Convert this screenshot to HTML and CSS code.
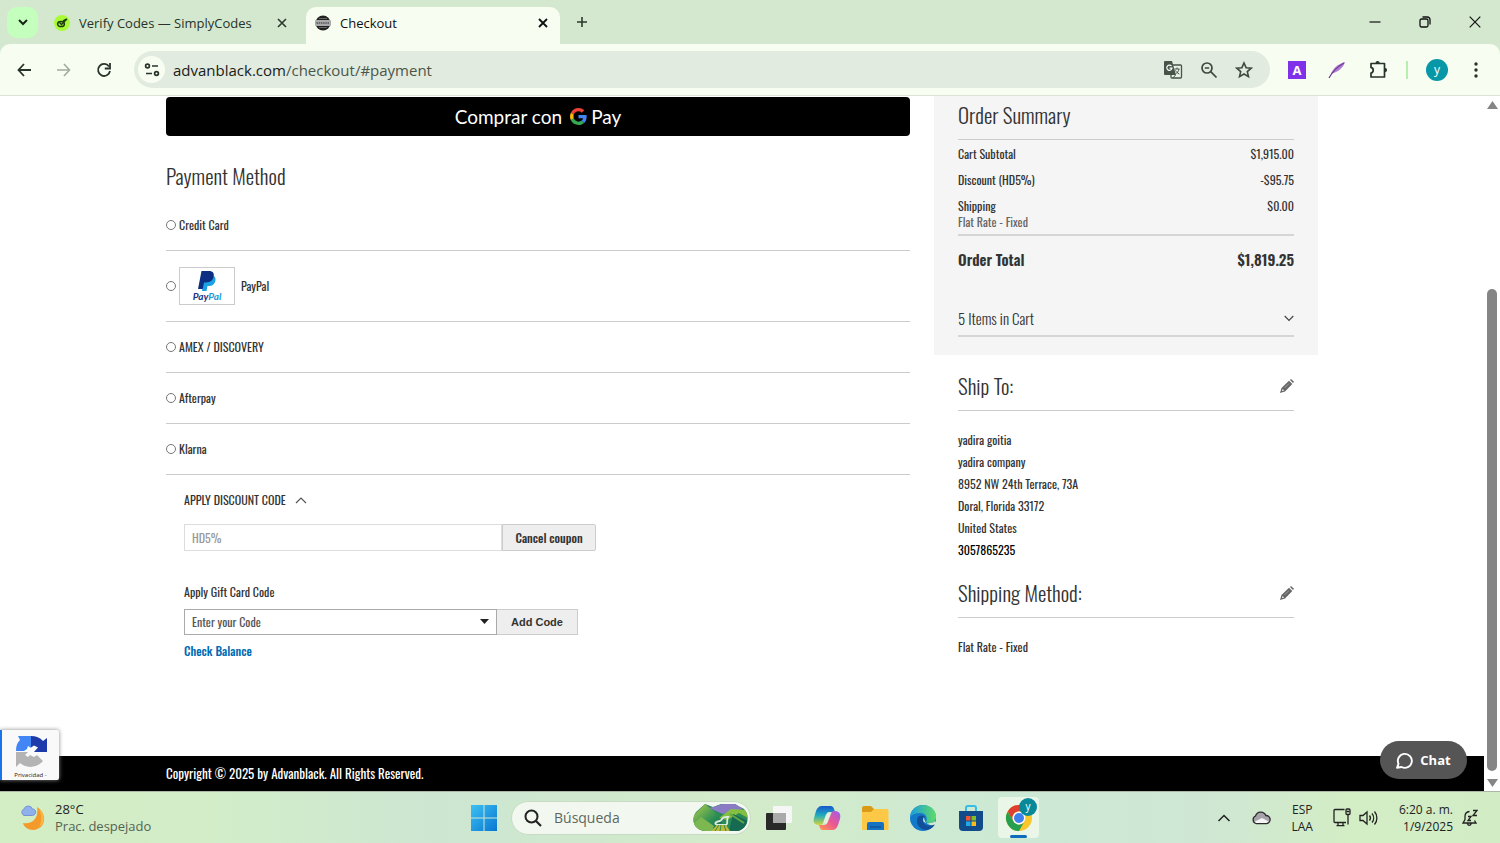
FILE: index.html
```html
<!DOCTYPE html>
<html lang="es">
<head>
  <meta charset="UTF-8">
  <meta name="viewport" content="width=device-width, initial-scale=1.0">
  <title>Checkout</title>
  <link rel="stylesheet" href="styles.css">
</head>
<body>
  <header class="tabstrip">
    <button class="tab-search" aria-label="Buscar pestañas">
      <svg width="12" height="12" viewBox="0 0 12 12"><path d="M2 4l4 4 4-4" fill="none" stroke="#17251a" stroke-width="2"/></svg>
    </button>
    <div class="tab">
      <svg width="16" height="16" viewBox="0 0 16 16"><circle cx="8" cy="8" r="8" fill="#a9fb38"/><ellipse cx="7" cy="9" rx="3.400" ry="2.600" fill="none" stroke="#1c3b10" stroke-width="1.500"/><path d="M5.500 7.500l2 2L13 4M9 6l4-2" fill="none" stroke="#1c3b10" stroke-width="1.400"/></svg>
      <span class="tab-title">Verify Codes — SimplyCodes</span>
      <button class="icon-button" aria-label="Cerrar"><svg width="10" height="10" viewBox="0 0 10 10"><path d="M1 1l8 8M9 1L1 9" stroke="#2c3a2e" stroke-width="1.600"/></svg></button>
    </div>
    <div class="tab active">
      <svg width="16" height="16" viewBox="0 0 16 16"><circle cx="8" cy="8" r="7.500" fill="#222"/><path d="M4 3.500h8M4 12.500h8" stroke="#666" stroke-width="1"/><rect x="0" y="5" width="16" height="6" rx="1" fill="#aaa"/><path d="M1.500 8h13" stroke="#6a6a6a" stroke-width="2" stroke-dasharray="1.500 .7"/></svg>
      <span class="tab-title">Checkout</span>
      <button class="icon-button" aria-label="Cerrar"><svg width="10" height="10" viewBox="0 0 10 10"><path d="M1 1l8 8M9 1L1 9" stroke="#111" stroke-width="1.800"/></svg></button>
    </div>
    <button class="icon-button new-tab" aria-label="Nueva pestaña"><svg width="12" height="12" viewBox="0 0 12 12"><path d="M6 1v10M1 6h10" stroke="#2c3a2e" stroke-width="1.600"/></svg></button>
    <div class="window-buttons">
      <button class="icon-button" aria-label="Minimizar"><svg width="12" height="12" viewBox="0 0 12 12"><path d="M0.500 6h11" stroke="#111" stroke-width="1.200"/></svg></button>
      <button class="icon-button" aria-label="Restaurar"><svg width="12" height="12" viewBox="0 0 12 12"><rect x="1" y="3" width="8" height="8" rx="1.500" fill="none" stroke="#111" stroke-width="1.300"/><path d="M3.500 1h5A2.500 2.500 0 0 1 11 3.500v5" fill="none" stroke="#111" stroke-width="1.300"/></svg></button>
      <button class="icon-button" aria-label="Cerrar ventana"><svg width="12" height="12" viewBox="0 0 12 12"><path d="M.7.7l10.600 10.600M11.300.7L.7 11.300" stroke="#111" stroke-width="1.200"/></svg></button>
    </div>
  </header>

  <nav class="toolbar">
    <div class="nav-buttons">
      <button class="icon-button" aria-label="Atrás"><svg width="16" height="16" viewBox="0 0 16 16"><path d="M8 2L2.500 8 8 14M2.500 8H15" fill="none" stroke="#28332a" stroke-width="1.800"/></svg></button>
      <button class="icon-button" aria-label="Adelante"><svg width="16" height="16" viewBox="0 0 16 16"><path d="M8 2l5.500 6L8 14M13.500 8H1" fill="none" stroke="#a2aba0" stroke-width="1.600"/></svg></button>
      <button class="icon-button" aria-label="Recargar"><svg width="16" height="16" viewBox="0 0 16 16"><path d="M13 4.500A6 6 0 1 0 14 9" fill="none" stroke="#28332a" stroke-width="1.800"/><path d="M14 1v5.500H8.800" fill="none" stroke="#28332a" stroke-width="1.800"/></svg></button>
    </div>
    <div class="address-bar">
      <button class="site-info" aria-label="Información del sitio"><svg width="16" height="14" viewBox="0 0 16 14"><g fill="none" stroke="#28332a" stroke-width="1.700"><circle cx="3.500" cy="3" r="1.900"/><path d="M8 3h6M2 10.500h6"/><circle cx="12.500" cy="10.500" r="1.900"/></g></svg></button>
      <a class="url" href="#payment">advanblack.com<span>/checkout/#payment</span></a>
      <button class="icon-button" aria-label="Traducir"><svg width="20" height="20" viewBox="0 0 20 20"><rect x="8" y="5" width="10.500" height="13" rx="1" fill="#e9f0e4" stroke="#48544a" stroke-width="1.300"/><path d="M2 1h7l4 14H2a1 1 0 0 1-1-1V2a1 1 0 0 1 1-1z" fill="#48544a"/><path d="M8.500 6.200a2.600 2.600 0 1 0 .5 2H6.500" fill="none" stroke="#fff" stroke-width="1.200"/><path d="M11.500 9h5M14 7.500V9M16 9c-.5 2.500-2 4-3.500 5M12.500 10.500c.8 1.500 2 2.500 3.800 3.500M10 18l2.500-3" fill="none" stroke="#48544a"/></svg></button>
      <button class="icon-button" aria-label="Zoom"><svg width="18" height="18" viewBox="0 0 18 18"><g fill="none" stroke="#3d493f" stroke-width="1.700"><circle cx="7" cy="7" r="5"/><path d="M10.700 10.700L16.500 16.500M4.800 7h4.400"/></g></svg></button>
      <button class="icon-button" aria-label="Favoritos"><svg width="18" height="18" viewBox="0 0 18 18"><path d="M9 2l2.100 4.700 5.100.5-3.900 3.400 1.200 5L9 13l-4.500 2.600 1.200-5L1.800 7.200l5.100-.5z" fill="none" stroke="#3d493f" stroke-width="1.600"/></svg></button>
    </div>
    <button class="ext-a" aria-label="Extensión A">A</button>
    <button class="icon-button" aria-label="Extensión pluma"><svg width="18" height="18" viewBox="0 0 18 18"><path d="M17 1C10 3 5 7 3 13c6-2 12-5 14-12z" fill="#b27fd4"/><path d="M1 17C4 11 9 6 16 2" fill="none" stroke="#6c3b92" stroke-width="1.200"/></svg></button>
    <button class="icon-button" aria-label="Extensiones"><svg width="20" height="20" viewBox="0 0 20 20"><path d="M3 3.500h13.500v13.500H3v-3.900c3-.8 3-4.900 0-5.700z" fill="none" stroke="#28332a" stroke-width="1.700" stroke-linejoin="round"/><path d="M7.500 3a2.100 2.100 0 0 1 4.200 0zM17 8a2.100 2.100 0 0 1 0 4.200z" fill="#28332a"/></svg></button>
    <span class="divider"></span>
    <button class="avatar" aria-label="Perfil">y</button>
    <button class="icon-button menu" aria-label="Menú"><svg width="16" height="18" viewBox="0 0 16 18"><g fill="#28332a"><circle cx="8" cy="3" r="1.700"/><circle cx="8" cy="9" r="1.700"/><circle cx="8" cy="15" r="1.700"/></g></svg></button>
  </nav>

  <div class="viewport">
    <div class="page">
      <main class="checkout">
        <section class="payment">
          <button class="gpay" aria-label="Comprar con Google Pay">
            <span>Comprar con</span>
            <span class="gpay-logo">
              <svg width="17" height="17" viewBox="0 0 48 48"><path fill="#ea4335" d="M24 9.500c3.540 0 6.710 1.220 9.210 3.600l6.850-6.850C35.900 2.380 30.470 0 24 0 14.620 0 6.510 5.380 2.560 13.220l7.980 6.190C12.430 13.720 17.740 9.500 24 9.500z"/><path fill="#4285f4" d="M46.980 24.550c0-1.570-.15-3.090-.38-4.550H24v9.020h12.940c-.58 2.960-2.260 5.480-4.780 7.180l7.730 6c4.510-4.180 7.090-10.360 7.090-17.650z"/><path fill="#fbbc05" d="M10.530 28.590c-.48-1.450-.76-2.990-.76-4.590s.27-3.140.76-4.590l-7.980-6.190C.92 16.460 0 20.120 0 24c0 3.880.92 7.540 2.560 10.780l7.970-6.190z"/><path fill="#34a853" d="M24 48c6.480 0 11.930-2.130 15.890-5.810l-7.730-6c-2.150 1.450-4.920 2.300-8.160 2.300-6.260 0-11.570-4.220-13.470-9.910l-7.980 6.190C6.510 42.620 14.620 48 24 48z"/></svg>
              Pay
            </span>
          </button>
          <h2>Payment Method</h2>
          <div class="methods">
            <label class="method"><input type="radio" name="method">Credit Card</label>
            <label class="method"><input type="radio" name="method">
              <span class="paypal-logo">
                <svg width="18" height="20" viewBox="0 0 18 20"><path d="M6 5h8c3 0 4 2 3.300 5-.8 3.500-3 5-6.300 5H9.500L8.500 20H4z" fill="#1ba0e2"/><path d="M3.500 0H11c4 0 5.500 2.300 4.600 5.800C14.700 9.500 12 11.500 8 11.500H6L4.700 18H0z" fill="#0d2f81"/></svg>
                <b>Pay<i>Pal</i></b>
              </span>
              PayPal</label>
            <label class="method"><input type="radio" name="method">AMEX / DISCOVERY</label>
            <label class="method"><input type="radio" name="method">Afterpay</label>
            <label class="method"><input type="radio" name="method">Klarna</label>
          </div>

          <div class="codes">
            <button class="discount-title">APPLY DISCOUNT CODE
              <svg width="12" height="8" viewBox="0 0 12 8"><path d="M1 7l5-5 5 5" fill="none" stroke="#555" stroke-width="1.200"/></svg>
            </button>
            <div class="coupon-row">
              <input type="text" value="HD5%" aria-label="Discount code" disabled>
              <button>Cancel coupon</button>
            </div>
            <label class="gift-label" for="gift">Apply Gift Card Code</label>
            <div class="gift-row">
              <div class="select-wrap">
                <select id="gift"><option>Enter your Code</option></select>
                <svg class="caret" width="9" height="5" viewBox="0 0 9 5"><path d="M0 0h9L4.500 5z" fill="#222"/></svg>
              </div>
              <button>Add Code</button>
            </div>
            <a class="balance" href="#balance">Check Balance</a>
          </div>
        </section>

        <aside class="sidebar">
          <section class="summary">
            <h2>Order Summary</h2>
            <table class="totals">
              <tr><th scope="row">Cart Subtotal</th><td>$1,915.00</td></tr>
              <tr><th scope="row">Discount (HD5%)</th><td>-$95.75</td></tr>
              <tr><th scope="row">Shipping<small>Flat Rate - Fixed</small></th><td>$0.00</td></tr>
              <tr class="grand"><th scope="row">Order Total</th><td>$1,819.25</td></tr>
            </table>
            <button class="items">5 Items in Cart
              <svg width="10" height="7" viewBox="0 0 10 7"><path d="M.7 1L5 5.300 9.300 1" fill="none" stroke="#444" stroke-width="1.200"/></svg>
            </button>
          </section>
          <section class="info">
            <div class="info-title">
              <h2>Ship To:</h2>
              <button class="icon-button" aria-label="Editar dirección"><svg width="14" height="14" viewBox="0 0 14 14"><path d="M0 14l1.500-5L9 1.700 12.300 5 5 12.500z" fill="#666"/><path d="M10 1l1-1 3 2.800-1 1.300z" fill="#666"/><path d="M1.900 12.100l.8-2.200 1.500 1.500z" fill="#fff"/><path d="M4.500 9l4.500-4.500" stroke="#bbb" stroke-width=".7"/></svg></button>
            </div>
            <p>yadira goitia<br>yadira company<br>8952 NW 24th Terrace, 73A<br>Doral, Florida 33172<br>United States<br><a href="tel:3057865235">3057865235</a></p>
          </section>
          <section class="info">
            <div class="info-title">
              <h2>Shipping Method:</h2>
              <button class="icon-button" aria-label="Editar envío"><svg width="14" height="14" viewBox="0 0 14 14"><path d="M0 14l1.500-5L9 1.700 12.300 5 5 12.500z" fill="#666"/><path d="M10 1l1-1 3 2.800-1 1.300z" fill="#666"/><path d="M1.900 12.100l.8-2.200 1.500 1.500z" fill="#fff"/><path d="M4.500 9l4.500-4.500" stroke="#bbb" stroke-width=".7"/></svg></button>
            </div>
            <p>Flat Rate - Fixed</p>
          </section>
        </aside>
      </main>
      <footer class="footer"><div>Copyright © 2025 by Advanblack. All Rights Reserved.</div></footer>
    </div>

    <div class="scrollbar">
      <svg width="11" height="8" viewBox="0 0 11 8"><path d="M5.500 0L11 8H0z" fill="#858585"/></svg>
      <span class="gap"></span>
      <span class="thumb"></span>
      <svg width="11" height="8" viewBox="0 0 11 8"><path d="M0 0h11L5.500 8z" fill="#858585"/></svg>
    </div>

    <div class="recaptcha">
      <svg width="32" height="32" viewBox="0 0 32 32"><path d="M16 1c5 0 9 1.500 12 5l4-3v14H19l4-4.500-4-2-3 2z" fill="#1c3aa9"/><path d="M16 1v12l-3-2-1 3-3 2H1c0-5 1-8 4-11L3 1z" fill="#4285f4"/><path d="M1 17h12l-3 3 3 2 2-2 4 2 3-2 6 6C21 34 10 33 5 28l-4 4z" fill="#b4b4b4"/></svg>
      <span>Privacidad -</span>
    </div>
    <button class="chat">
      <svg width="17" height="17" viewBox="0 0 17 17"><path d="M1 15.800l1.500-4A7 7 0 1 1 5.500 15z" fill="none" stroke="#fff" stroke-width="1.900" stroke-linejoin="round"/></svg>
      Chat
    </button>
  </div>

  <div class="taskbar">
    <div class="weather">
      <svg width="26" height="26" viewBox="0 0 26 26"><path d="M17 2c11 7 9 22-4 23C8 25 4 22 3 18c10 2 16-6 14-16z" fill="#f39a2b"/><path d="M19 4c7 6 6 15 0 18 3-6 3-12 0-18z" fill="#fbb646"/><path d="M4 10.500a3.500 3.500 0 0 1 0-6.500 4.500 4.500 0 0 1 8.500 0c4 0 4.500 6 0 6.500z" fill="#8fb0ea" stroke="#7395d8"/></svg>
      <div>28°C<small>Prac. despejado</small></div>
    </div>
    <div class="apps">
      <button class="app" aria-label="Inicio"><svg width="26" height="26" viewBox="0 0 26 26"><defs><linearGradient id="win" x1="0" y1="0" x2="1" y2="1"><stop offset="0" stop-color="#3cc1f3"/><stop offset="1" stop-color="#0876d2"/></linearGradient></defs><path d="M0 0h12.500v12.500H0zM13.500 0H26v12.500H13.500zM0 13.500h12.500V26H0zM13.500 13.500H26V26H13.500z" fill="url(#win)"/></svg></button>
      <div class="search">
        <svg width="18" height="18" viewBox="0 0 18 18"><circle cx="7.500" cy="7.500" r="6" fill="none" stroke="#222" stroke-width="2"/><path d="M12 12l5 5" stroke="#222" stroke-width="2.200"/></svg>
        <input type="search" placeholder="Búsqueda" aria-label="Búsqueda">
        <svg class="landscape" width="55" height="27" viewBox="0 0 55 27">
          <defs>
            <clipPath id="pill"><path d="M3 8L12 0l8 3 8-3h14l5 3c11 3 10 21-2 24H13C2 27-3 17 3 8z"/></clipPath>
            <linearGradient id="hill" x1="0" y1="0" x2="1" y2="1"><stop offset="0" stop-color="#b4cf4c"/><stop offset=".6" stop-color="#2d8f55"/><stop offset="1" stop-color="#146052"/></linearGradient>
          </defs>
          <g clip-path="url(#pill)">
            <path d="M0 0h55v27H0z" fill="#2c8a58"/>
            <path d="M16 4L30 0h14l6 5-20 5z" fill="#8a7cc4"/>
            <path d="M0 12L12 0l18 15-4 12H0z" fill="url(#hill)"/>
            <path d="M0 20l8-7 13 9-2 5H0z" fill="#7cb84f"/>
            <path d="M26 14L38 5l17 1v8l-9-5-12 7z" fill="#84bf42"/>
            <path d="M40 10l15 7v10H36z" fill="#176a52"/>
            <path d="M37 10l14 9" stroke="#5fa845" stroke-width="2"/>
            <path d="M34 13c-6-1-4 3-7 4-6 1-6 4-1 4h6c4 0 1-5 3-8z" fill="none" stroke="#dceadf" stroke-width="1.800"/>
            <path d="M18 27l6-6h9l4 6z" fill="#b9bb3c"/>
            <path d="M22 27l4-6M27 27l1-6M33 27l-2-6" stroke="#3a8a3e"/>
          </g>
        </svg>
      </div>
      <button class="app" aria-label="Vista de tareas"><svg width="28" height="28" viewBox="0 0 28 28"><rect x="8" y="2" width="19" height="17" rx="1" fill="#f6f6f6"/><rect x="1" y="9" width="20" height="17" rx="1" fill="#292929"/><path d="M8 9h13v10H8z" fill="#aaa"/></svg></button>
      <button class="app" aria-label="Copilot"><svg width="28" height="28" viewBox="0 0 28 28"><defs><linearGradient id="cop1" x1="0" y1="0" x2="0" y2="1"><stop offset="0" stop-color="#1757cc"/><stop offset=".5" stop-color="#20aebd"/><stop offset="1" stop-color="#d6d43a"/></linearGradient><linearGradient id="cop2" x1="1" y1="0" x2="0" y2="1"><stop offset="0" stop-color="#9c5df0"/><stop offset=".5" stop-color="#ec5690"/><stop offset="1" stop-color="#ff9b4d"/></linearGradient></defs><path d="M9 2h9c2 0 3 2 4 6h-5c-3 0-4 2-5 5l-2 6c-1 2-2 2-4 2-5 0-6-3-5-7l2-7c1-3 3-5 6-5z" fill="url(#cop1)"/><path d="M19 26h-9c-2 0-3-1-4-5h5c3 0 4-3 5-6l2-5c1-3 2-3 4-3 5 0 6 4 5 8l-2 6c-1 3-3 5-6 5z" fill="url(#cop2)"/><path d="M16 9l-4 10" stroke="#e6f2e1" stroke-width="3"/></svg></button>
      <button class="app" aria-label="Explorador"><svg width="28" height="28" viewBox="0 0 28 28"><path d="M1 4a2 2 0 0 1 2-2h7l3 3v5H1z" fill="#d99b16"/><path d="M1 8h9l3-3h13a1.500 1.500 0 0 1 1.500 1.500V26H1z" fill="#fcc846"/><path d="M6 26v-6a2 2 0 0 1 2-2h13a2 2 0 0 1 2 2v6z" fill="#1673c3"/><path d="M9 23h11" stroke="#0d559b" stroke-width="1.500"/></svg></button>
      <button class="app" aria-label="Edge"><svg width="28" height="28" viewBox="0 0 28 28"><defs><linearGradient id="edge"><stop offset="0" stop-color="#1b9cdd"/><stop offset="1" stop-color="#5fdc67"/></linearGradient></defs><circle cx="14" cy="14" r="13" fill="#1379c9"/><path d="M1 13C2 5 8 1 14 1c9 0 14 7 13 13-1 5-7 6-10 4 2-4 0-9-6-9-5 0-8 2-10 4z" fill="url(#edge)"/><path d="M9 13c-3 6 1 13 9 13 4-1 7-3 8-6-5 3-11 2-12-3 0-2 1-3 2-4-2-2-5-2-7 0z" fill="#124f9a"/><path d="M15 13c-3 5 2 7 6 6 2 0 4-1 5-2l1 3c-5 3-12 0-12-7z" fill="#d4ebd0"/></svg></button>
      <button class="app" aria-label="Microsoft Store"><svg width="28" height="28" viewBox="0 0 28 28"><path d="M9 8V4a2 2 0 0 1 2-2h6a2 2 0 0 1 2 2v4" fill="none" stroke="#35bde6" stroke-width="2"/><path d="M2 7h24v16a4 4 0 0 1-4 4H6a4 4 0 0 1-4-4z" fill="#124b89"/><path d="M9 12h4.500v4.500H9z" fill="#ef5630"/><path d="M14.500 12H19v4.500h-4.500z" fill="#82bd25"/><path d="M9 17.500h4.500V22H9z" fill="#20a9e8"/><path d="M14.500 17.500H19V22h-4.500z" fill="#fdbd19"/></svg></button>
      <button class="app current" aria-label="Chrome">
        <svg width="28" height="28" viewBox="0 0 28 28"><circle cx="14" cy="14" r="13" fill="#f9c62c"/><path d="M2.700 7.500A13 13 0 0 1 25.300 7.500H14a6.500 6.500 0 0 0-5.700 9.700z" fill="#df3f31"/><path d="M2.700 7.500A13 13 0 0 0 14 27l5.600-9.700a6.500 6.500 0 0 1-11.300 0z" fill="#279f50"/><circle cx="14" cy="14" r="6.400" fill="#fff"/><circle cx="14" cy="14" r="5" fill="#3e80ed"/></svg>
        <span class="badge">y</span>
      </button>
    </div>
    <div class="tray">
      <button class="icon-button" aria-label="Iconos ocultos"><svg width="14" height="14" viewBox="0 0 14 14"><path d="M1.500 10L7 4.500l5.500 5.500" fill="none" stroke="#222" stroke-width="1.500"/></svg></button>
      <svg width="20" height="14" viewBox="0 0 20 14"><path d="M5 12.500a4 4 0 0 1-.5-7.500 5.500 5.500 0 0 1 10.300-.5 4 4 0 0 1 .7 8z" fill="#a7a3aa" stroke="#2c2c2c" stroke-width="1.300"/><path d="M4 10.500l7-3.500 6.500 3.500-2 1.500H5z" fill="#f5f5f5"/></svg>
      <div class="lang">ESP<br>LAA</div>
      <div class="status">
        <svg width="18" height="19" viewBox="0 0 18 19"><g fill="none" stroke="#222" stroke-width="1.300"><path d="M11.500 1.500H2a1 1 0 0 0-1 1v11a1 1 0 0 0 1 1h11M5 14.500v3M10 14.500v3M3.500 17.700h8"/><rect x="13" y="1" width="4" height="5.500" rx="1"/><path d="M15 6.500v10M13.500 3.500h3"/></g></svg>
        <svg width="20" height="16" viewBox="0 0 20 16"><g fill="none" stroke="#222" stroke-width="1.300"><path d="M1 5.500v5h3l4 3.500V2L4 5.500z"/><path d="M10.500 5.500a4 4 0 0 1 0 5M13 3.500a7 7 0 0 1 0 9M15.500 1.500a10 10 0 0 1 0 13"/></g></svg>
      </div>
      <div class="clock">
        <div>6:20 a. m.<br>1/9/2025</div>
        <svg width="16" height="18" viewBox="0 0 16 18"><g fill="none" stroke="#222" stroke-width="1.300"><path d="M7.500 2.500c-3 .3-4.500 2.500-4.500 5v3L1 14h13l-1.500-2.500M5.500 14.500c.5 2.500 3 2.500 3.700 0"/><path d="M6 7.500h3l-3 4h3M11 1.500h4L11 6.500h4"/></g></svg>
      </div>
    </div>
  </div>
</body>
</html>
```
FILE: styles.css
```css
* {
  box-sizing: border-box;
}
html, body {
  margin: 0;
  height: 100%;
}
body {
  display: flex;
  flex-direction: column;
  overflow: hidden;
  font-family: "Open Sans", "Noto Sans", sans-serif;
  font-size: 13px;
  background: #d3e8cf;
  color: #28332a;
}
button, input, select {
  font: inherit;
  color: inherit;
  margin: 0;
}
button {
  display: flex;
  align-items: center;
  justify-content: center;
  padding: 0;
  border: none;
  background: none;
  white-space: nowrap;
  cursor: pointer;
}
a {
  color: inherit;
  text-decoration: none;
}
svg {
  display: block;
  flex: none;
}
h2, p {
  margin: 0;
}

/* browser */
.tabstrip {
  display: flex;
  align-items: center;
  height: 44px;
  padding: 0 19px 0 7px;
}
.tab-search {
  width: 31px;
  height: 31px;
  border-radius: 10px;
  background: #c5ffbd;
}
.tab {
  display: flex;
  align-items: center;
  gap: 9px;
  width: 254px;
  height: 37px;
  align-self: flex-end;
  padding: 0 12px 6px 9px;
  margin-left: 7px;
}
.tab.active {
  border-radius: 10px 10px 0 0;
  background: #f8fdf2;
  color: #111;
}
.tab-title {
  flex: 1;
  white-space: nowrap;
}
.new-tab {
  margin-left: 16px;
}
.window-buttons {
  display: flex;
  gap: 38px;
  margin-left: auto;
}
.toolbar {
  display: flex;
  align-items: center;
  gap: 22px;
  height: 52px;
  padding: 0 16px;
  border-bottom: 1px solid #dde3d8;
  border-radius: 10px 10px 0 0;
  background: #f8fdf2;
}
.nav-buttons {
  display: flex;
  gap: 24px;
}
.address-bar {
  display: flex;
  align-items: center;
  gap: 17px;
  flex: 1;
  height: 37px;
  padding: 0 17px 0 4px;
  border-radius: 19px;
  background: #e2ebdf;
}
.site-info {
  width: 27px;
  height: 27px;
  border-radius: 50%;
  background: #f8fdf2;
}
.url {
  flex: 1;
  margin-left: -9px;
  font-size: 15px;
  color: #18201a;
}
.url span {
  color: #4a564b;
}
.ext-a {
  width: 18px;
  height: 18px;
  margin-left: -4px;
  background: #8030e8;
  color: #fff;
  font-weight: bold;
}
.divider {
  width: 2px;
  height: 18px;
  margin: 0 -4px;
  background: #b6efb0;
}
.avatar {
  width: 22px;
  height: 22px;
  border-radius: 50%;
  background: #0797a7;
  color: #fff;
  font-size: 12px;
}
.menu {
  margin-left: -2px;
}

/* checkout */
.viewport {
  position: relative;
  display: flex;
  flex: 1;
  min-height: 0;
  background: #fff;
  overflow: hidden;
}
.page {
  display: flex;
  flex-direction: column;
  flex: 1;
  font-family: Oswald, "Liberation Sans Narrow", sans-serif;
  font-size: 12px;
  line-height: 18px;
  color: #333;
}
.checkout {
  display: grid;
  grid-template-columns: minmax(0, 1fr) minmax(0, 384px);
  gap: 24px;
  flex: 1;
  width: 100%;
  max-width: 1152px;
  margin: 0 auto;
}
h2 {
  font-size: 21px;
  font-weight: 300;
  line-height: 30px;
}
.payment {
  padding-top: 1px;
}
.gpay {
  gap: 8px;
  width: 100%;
  height: 39px;
  margin-bottom: 25px;
  border-radius: 4px;
  background: #000;
  color: #fff;
  font-family: Lato, sans-serif;
  font-size: 19px;
}
.gpay-logo {
  display: flex;
  align-items: center;
  gap: 4px;
}
.methods {
  margin-top: 9px;
}
.method {
  display: flex;
  align-items: center;
  gap: 3px;
  padding: 16px 0;
  border-bottom: 1px solid #ccc;
}
.method input {
  width: 10px;
  height: 10px;
}
.paypal-logo {
  display: flex;
  flex-direction: column;
  align-items: center;
  justify-content: center;
  width: 56px;
  height: 38px;
  margin-right: 3px;
  border: 1px solid #ccc;
  font-family: Lato, sans-serif;
  font-size: 10px;
  line-height: 11px;
  font-style: italic;
  color: #1b3480;
}
.paypal-logo i {
  color: #1b9ad8;
}
.codes {
  padding: 16px 0 0 18px;
}
.discount-title {
  gap: 9px;
}
.coupon-row, .gift-row {
  display: flex;
}
.coupon-row {
  max-width: 412px;
  height: 27px;
  margin: 15px 0 32px;
}
.coupon-row input {
  flex: 1;
  min-width: 0;
  padding: 0 7px;
  border: 1px solid #ddd;
  background: #fff;
  color: #999;
}
.coupon-row button, .gift-row button {
  border: 1px solid #ccc;
  background: #eee;
  font-weight: 600;
}
.coupon-row button {
  width: 94px;
  border-radius: 0 2px 2px 0;
}
.gift-label {
  display: block;
}
.gift-row {
  max-width: 394px;
  height: 26px;
  margin: 8px 0 7px;
}
.select-wrap {
  position: relative;
  flex: 1;
}
.select-wrap select {
  width: 100%;
  height: 100%;
  padding: 0 7px;
  border: 1px solid #aaa;
  border-radius: 0;
  background: #fff;
  appearance: none;
  color: #555;
}
.caret {
  position: absolute;
  top: 10px;
  right: 8px;
  pointer-events: none;
}
.gift-row button {
  width: 81px;
  border-left: none;
  font-family: "Liberation Sans", Arial, sans-serif;
  font-size: 11px;
}
.coupon-row button, .balance {
  font-weight: 500;
}
.balance {
  color: #006bb4;
}
.summary {
  padding: 4px 24px 18px;
  background: #f5f5f5;
}
.summary h2, .info-title {
  padding-bottom: 9px;
  border-bottom: 1px solid #ccc;
}
.totals {
  width: 100%;
  border-collapse: collapse;
  line-height: 16px;
}
.totals th, .totals td {
  padding: 6px 0 4px;
  vertical-align: top;
  font-weight: normal;
  text-align: left;
}
.totals td {
  text-align: right;
}
.totals small {
  display: block;
  font-size: 12px;
  color: #666;
}
.totals .grand th, .totals .grand td {
  padding: 15px 0;
  border-top: 2px solid #d5d5d5;
  font-size: 15px;
  font-weight: 600;
}
.items {
  justify-content: space-between;
  width: 100%;
  margin-top: 26px;
  padding-bottom: 7px;
  border-bottom: 2px solid #d5d5d5;
  font-size: 15px;
  font-weight: 300;
  line-height: 20px;
}
.info {
  padding: 16px 24px 0;
}
.info + .info {
  padding-top: 17px;
}
.info-title {
  display: flex;
  align-items: center;
  justify-content: space-between;
}
.info p {
  margin-top: 18px;
  line-height: 22px;
}
.info a {
  color: #000;
}
.footer {
  padding: 8px 0 9px;
  background: #000;
  color: #fff;
  font-size: 13px;
  font-weight: 400;
}
.footer div {
  max-width: 1152px;
  margin: 0 auto;
}
.scrollbar {
  display: flex;
  flex-direction: column;
  align-items: center;
  width: 16px;
  padding: 5px 0 4px;
}
.scrollbar .gap {
  flex: 180;
}
.scrollbar .thumb {
  flex: 482;
  width: 10px;
  margin-bottom: 8px;
  border-radius: 5px;
  background: #858585;
}
.recaptcha {
  position: absolute;
  left: 0;
  bottom: 11px;
  display: flex;
  flex-direction: column;
  align-items: center;
  justify-content: space-between;
  width: 59px;
  height: 50px;
  padding: 5px 0 1px;
  border-left: 2px solid #1a73e8;
  border-radius: 0 2px 2px 0;
  background: #f9f9f9;
  box-shadow: 0 0 4px #888;
  font-size: 6px;
  line-height: 8px;
  color: #222;
}
.chat {
  position: absolute;
  right: 33px;
  bottom: 12px;
  gap: 7px;
  width: 87px;
  height: 38px;
  border-radius: 19px;
  background: #555;
  color: #fff;
  font-weight: bold;
}

/* taskbar */
.taskbar {
  display: grid;
  grid-template-columns: 1fr auto 1fr;
  align-items: center;
  height: 52px;
  padding: 0 22px 0 20px;
  border-top: 1px solid #a9b7a4;
  background: linear-gradient(90deg, #d3edc4 0%, #d2edc8 14%, #cce6d2 29%, #d3ebc9 50%, #cce9d5 68%, #cfe6d4 80%, #d3edc5 90%, #d2ecc5 100%);
  line-height: 17px;
  color: #222;
}
.weather {
  display: flex;
  align-items: center;
  gap: 9px;
}
.weather small {
  display: block;
  font-size: 13px;
  color: #566353;
}
.apps {
  display: flex;
  align-items: center;
  gap: 7px;
  margin-left: 4px;
}
.app {
  position: relative;
  width: 41px;
  height: 41px;
  border-radius: 4px;
}
.search {
  display: flex;
  align-items: center;
  gap: 10px;
  width: 240px;
  height: 34px;
  padding: 0 2px 0 12px;
  border: 1px solid #c5dcc2;
  border-radius: 17px;
  background: #f2f8ef;
}
.search input {
  flex: 1;
  min-width: 0;
  border: none;
  outline: none;
  background: none;
  font-size: 14px;
}
.search input::placeholder {
  color: #606760;
}
.current {
  background: #eaf6e7;
}
.current::after {
  content: "";
  position: absolute;
  bottom: 0;
  width: 17px;
  height: 3px;
  border-radius: 2px;
  background: #0f6cbd;
}
.badge {
  position: absolute;
  top: 1px;
  right: 2px;
  width: 18px;
  height: 18px;
  border-radius: 50%;
  background: #07899a;
  color: #fff;
  font-size: 10px;
}
.tray {
  display: flex;
  align-items: center;
  justify-content: flex-end;
  gap: 20px;
  font-size: 12px;
}
.lang {
  text-align: center;
}
.status {
  display: flex;
  align-items: center;
  gap: 8px;
}
.clock {
  display: flex;
  align-items: center;
  gap: 9px;
  text-align: right;
}
```
